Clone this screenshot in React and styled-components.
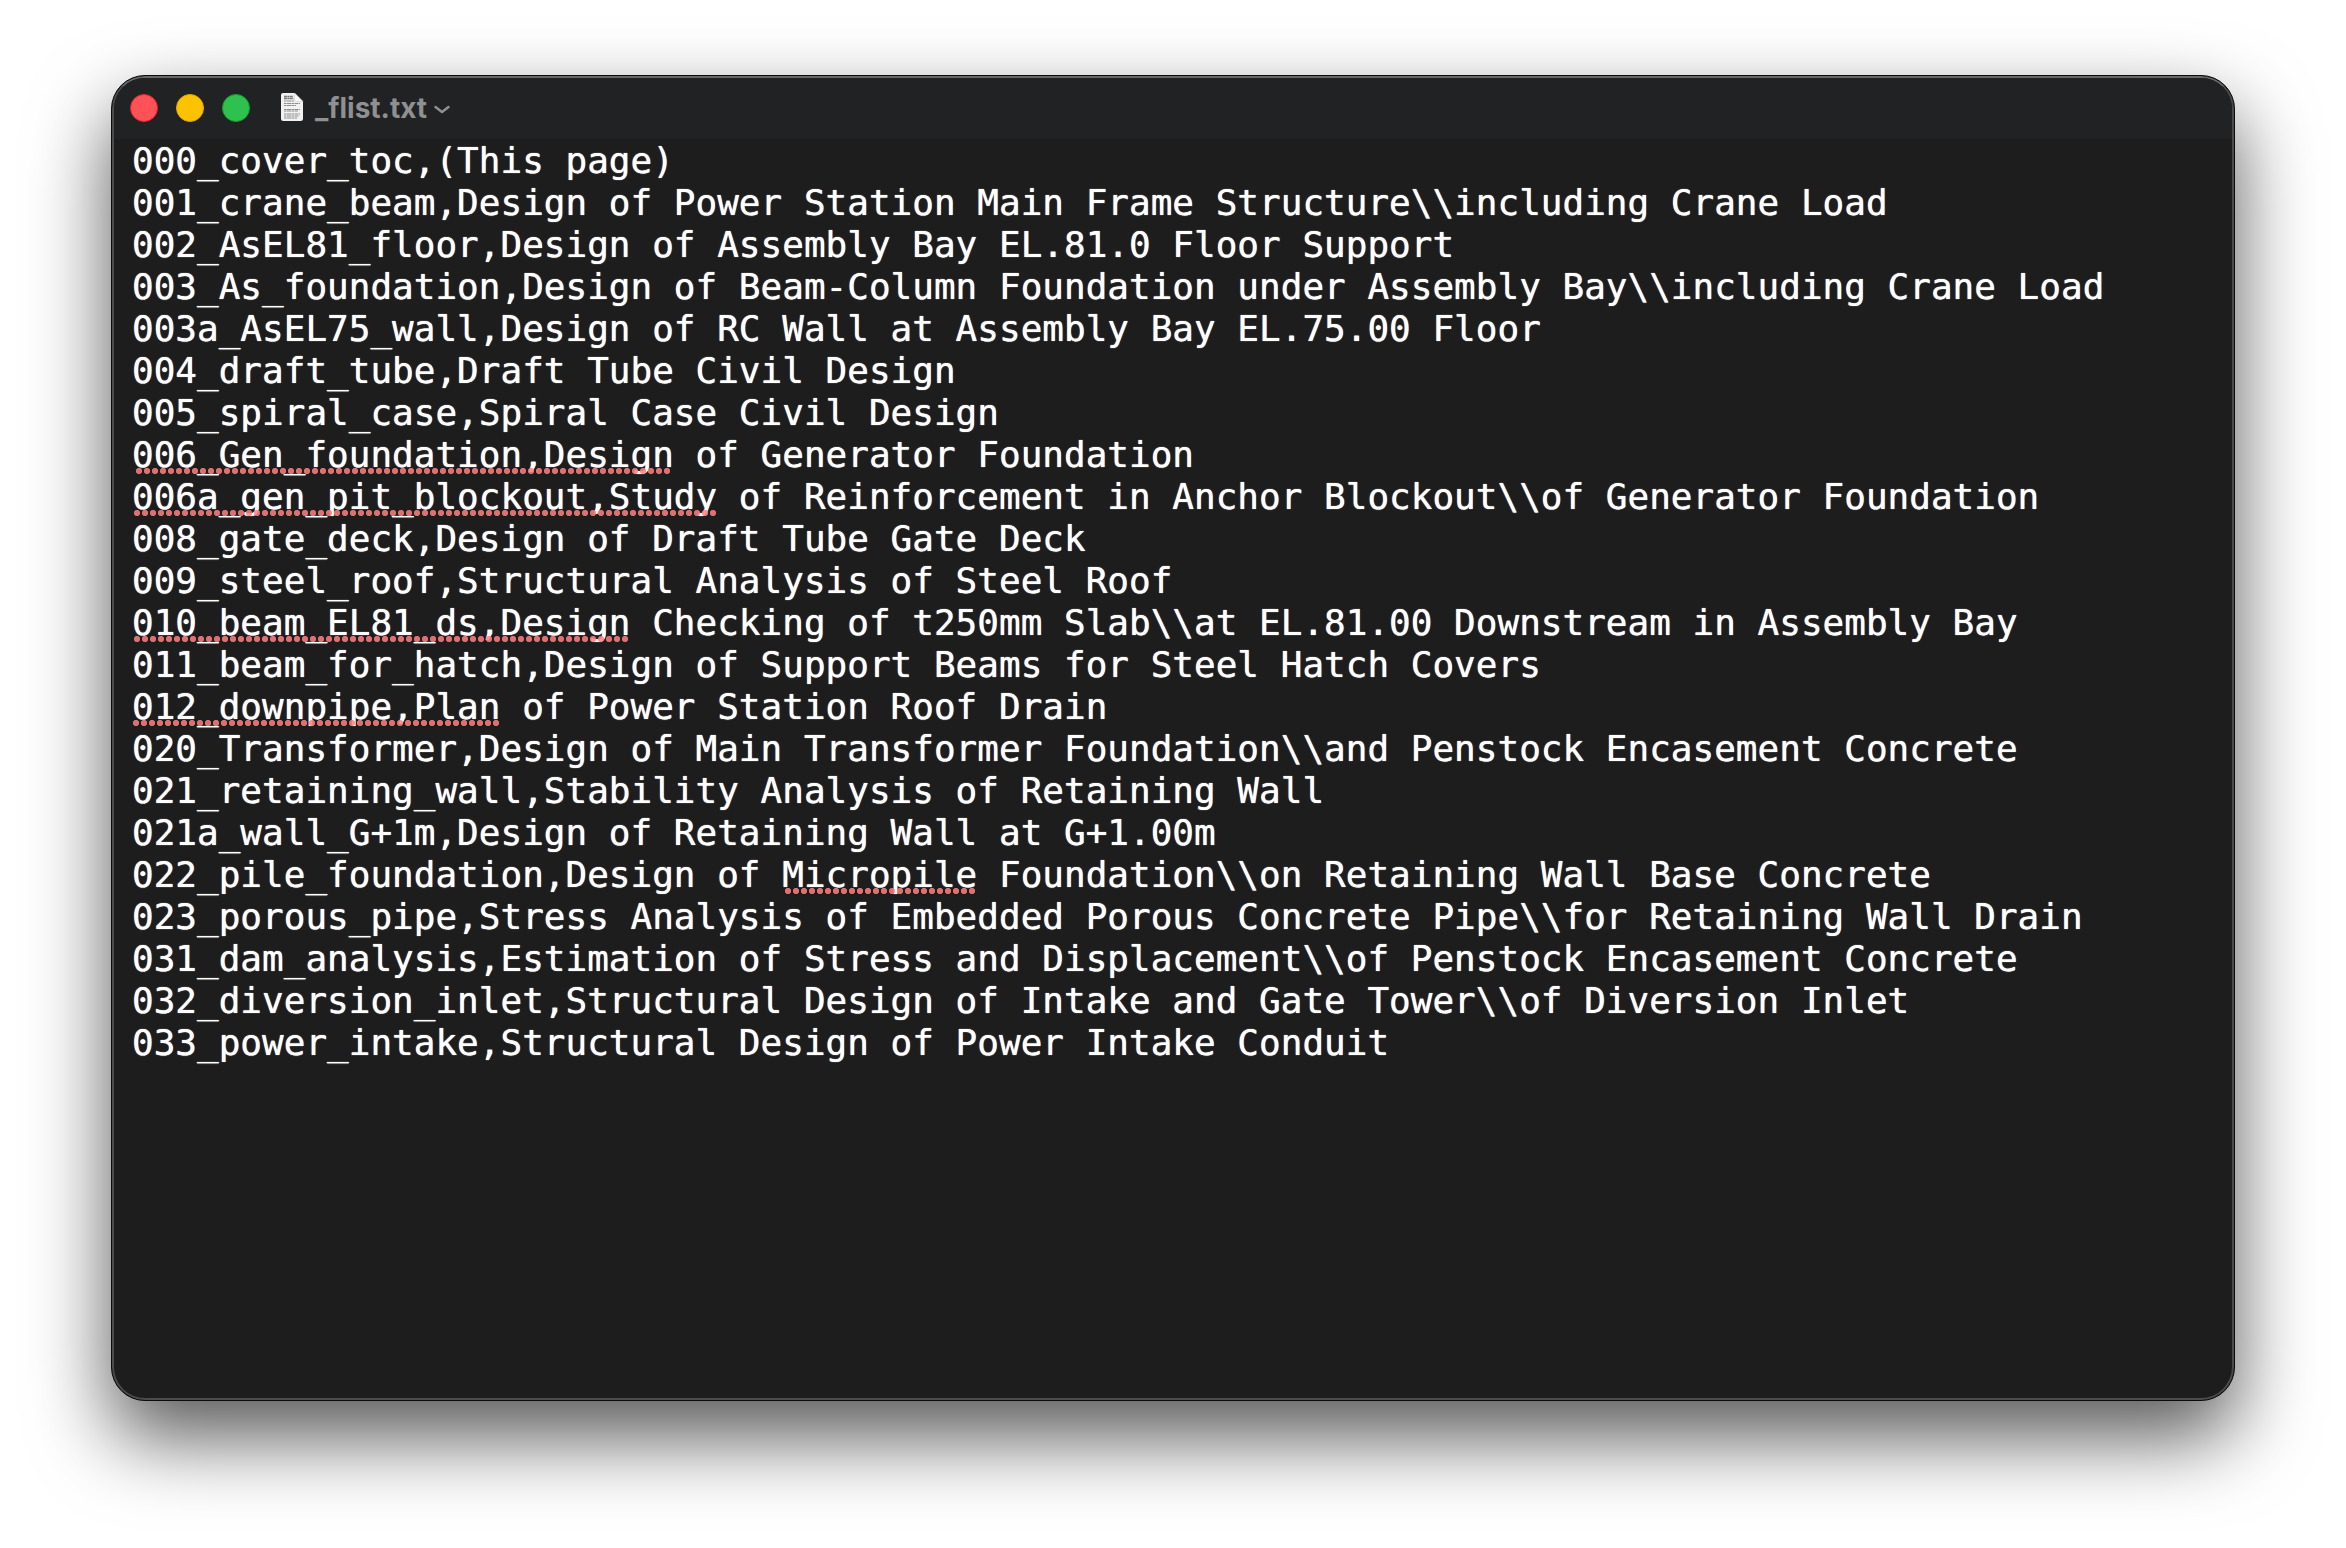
import styled, { createGlobalStyle } from "styled-components"

const GlobalStyle = createGlobalStyle`
  * {
    box-sizing: border-box;
  }
  body {
    margin: 0;
    background: #fff;
  }
`;

const Desktop = styled.main`
  display: flex;
  min-height: 100vh;
  padding: 75px 111px 147px;
  overflow: hidden;
`;

const Window = styled.section`
  flex: 1;
  min-width: 0;
  display: flex;
  flex-direction: column;
  border: 1px solid #0b0b0b;
  border-radius: 34px;
  background: #1d1d1d;
  overflow: hidden;
  box-shadow: 0 36px 80px rgba(0, 0, 0, 0.66);
`;

const Frame = styled.div`
  flex: 1;
  display: flex;
  flex-direction: column;
  border: 2px solid #4b4b4b;
  border-top-color: #66686a;
  border-radius: 33px;
  overflow: hidden;
`;

const TitleBar = styled.header`
  display: flex;
  align-items: center;
  height: 61px;
  padding: 0 16px 1px;
  background: #212224;
`;

const Lights = styled.div`
  display: flex;
  gap: 18px;
  margin-right: 30px;
`;

const Light = styled.button`
  width: 28px;
  height: 28px;
  padding: 0;
  border: 1px solid ${(props) => props.$edge};
  border-radius: 50%;
  background: ${(props) => props.$color};
`;

const Title = styled.h1`
  margin: 0 0 0 11px;
  font-family: Inter, "Liberation Sans", sans-serif;
  font-size: 28px;
  font-weight: 700;
  line-height: 32px;
  color: #8f9091;
`;

const TitleMenu = styled.button`
  display: flex;
  margin-left: 6px;
  padding: 2px 0 0;
  border: none;
  background: none;
  color: #8f9091;
`;

const Editor = styled.div`
  flex: 1;
  display: grid;
  padding: 1px 18px 0;
  font-family: "DejaVu Sans Mono", "Liberation Mono", monospace;
  font-size: 36px;
  line-height: 42px;
`;

const TextArea = styled.textarea`
  grid-area: 1 / 1;
  width: 100%;
  padding: 0;
  border: none;
  outline: none;
  resize: none;
  overflow: hidden;
  background: transparent;
  color: #fff;
  text-shadow: 0 0 1px #fff;
  font: inherit;
  white-space: pre;
`;

const Marks = styled.div`
  grid-area: 1 / 1;
  z-index: 1;
  pointer-events: none;
`;

const MarkRow = styled.div`
  height: 42px;
  padding-top: 34px;
`;

// Row of red dots under a misspelled word
const Mark = styled.div`
  height: 6px;
  background: radial-gradient(circle at 4px 3px, rgba(255, 128, 128, 0.85) 2.8px, transparent 3.4px) 0 0 / 8px 6px repeat-x;
`;

const LINES = [
  { text: "000_cover_toc,(This page)" },
  { text: "001_crane_beam,Design of Power Station Main Frame Structure\\\\including Crane Load" },
  { text: "002_AsEL81_floor,Design of Assembly Bay EL.81.0 Floor Support" },
  { text: "003_As_foundation,Design of Beam-Column Foundation under Assembly Bay\\\\including Crane Load" },
  { text: "003a_AsEL75_wall,Design of RC Wall at Assembly Bay EL.75.00 Floor" },
  { text: "004_draft_tube,Draft Tube Civil Design" },
  { text: "005_spiral_case,Spiral Case Civil Design" },
  { text: "006_Gen_foundation,Design of Generator Foundation", typo: "006_Gen_foundation,Design" },
  { text: "006a_gen_pit_blockout,Study of Reinforcement in Anchor Blockout\\\\of Generator Foundation", typo: "006a_gen_pit_blockout,Study" },
  { text: "008_gate_deck,Design of Draft Tube Gate Deck" },
  { text: "009_steel_roof,Structural Analysis of Steel Roof" },
  { text: "010_beam_EL81_ds,Design Checking of t250mm Slab\\\\at EL.81.00 Downstream in Assembly Bay", typo: "010_beam_EL81_ds,Design" },
  { text: "011_beam_for_hatch,Design of Support Beams for Steel Hatch Covers" },
  { text: "012_downpipe,Plan of Power Station Roof Drain", typo: "012_downpipe,Plan" },
  { text: "020_Transformer,Design of Main Transformer Foundation\\\\and Penstock Encasement Concrete" },
  { text: "021_retaining_wall,Stability Analysis of Retaining Wall" },
  { text: "021a_wall_G+1m,Design of Retaining Wall at G+1.00m" },
  { text: "022_pile_foundation,Design of Micropile Foundation\\\\on Retaining Wall Base Concrete", typo: "Micropile" },
  { text: "023_porous_pipe,Stress Analysis of Embedded Porous Concrete Pipe\\\\for Retaining Wall Drain" },
  { text: "031_dam_analysis,Estimation of Stress and Displacement\\\\of Penstock Encasement Concrete" },
  { text: "032_diversion_inlet,Structural Design of Intake and Gate Tower\\\\of Diversion Inlet" },
  { text: "033_power_intake,Structural Design of Power Intake Conduit" },
];

const CHAR_WIDTH = 21.67;
const DOT = 8;

// Only whole dots are drawn, centered under the word
function markStyle({ text, typo }) {
  const wordWidth = typo.length * CHAR_WIDTH;
  const width = Math.floor(wordWidth / DOT) * DOT;
  const start = text.indexOf(typo) * CHAR_WIDTH;
  return { width, marginLeft: Math.round(start + (wordWidth - width) / 2) };
}

function DocumentIcon() {
  return (
    <svg width="24" height="32" viewBox="0 0 24 32" aria-hidden="true">
      <path d="M3 1h11.500l8.500 8.500v17a2.500 2.500 0 0 1-2.500 2.500h-17A2.500 2.500 0 0 1 1 26.500V3a2 2 0 0 1 2-2z" fill="#f1f1f1" />
      <path d="M14.500 1l8.500 8.500h-6.500a2 2 0 0 1-2-2z" fill="#fff" stroke="#c4c4c4" strokeWidth="0.600" />
      <path d="M4 4.500h9M4 6.500h9.500" stroke="#777" strokeWidth="1.600" strokeDasharray="3 0.400 2 0.400" />
      <path d="M4 9h10M4 11.500h16M4 13.500h12M4 17.500h16M4 19h14M4 22h16M4 24h15M4 26h13" stroke="#8d8d8d" strokeWidth="1.200" strokeDasharray="2.500 0.500 4 0.500" />
    </svg>
  )
}

function App() {
  return (
    <Desktop>
      <GlobalStyle />
      <Window>
        <Frame>
          <TitleBar>
            <Lights>
              <Light $color="#ff5257" $edge="#e5242b" aria-label="Close" />
              <Light $color="#fbc200" $edge="#e0a800" aria-label="Minimize" />
              <Light $color="#2fc14f" $edge="#12a325" aria-label="Zoom" />
            </Lights>
            <DocumentIcon />
            <Title>_flist.txt</Title>
            <TitleMenu aria-label="Document options">
              <svg width="18" height="16" viewBox="0 0 18 16" fill="none" stroke="currentColor" strokeWidth="2.500" strokeLinecap="round" strokeLinejoin="round">
                <path d="M2.500 6l6.500 5 6.500-5" />
              </svg>
            </TitleMenu>
          </TitleBar>
          <Editor>
            <TextArea
              aria-label="_flist.txt"
              spellCheck={false}
              defaultValue={LINES.map((line) => line.text).join("\n")}
            />
            <Marks aria-hidden="true">
              {LINES.map((line) => (
                <MarkRow key={line.text}>
                  {line.typo && <Mark style={markStyle(line)} />}
                </MarkRow>
              ))}
            </Marks>
          </Editor>
        </Frame>
      </Window>
    </Desktop>
  )
}

export default App
